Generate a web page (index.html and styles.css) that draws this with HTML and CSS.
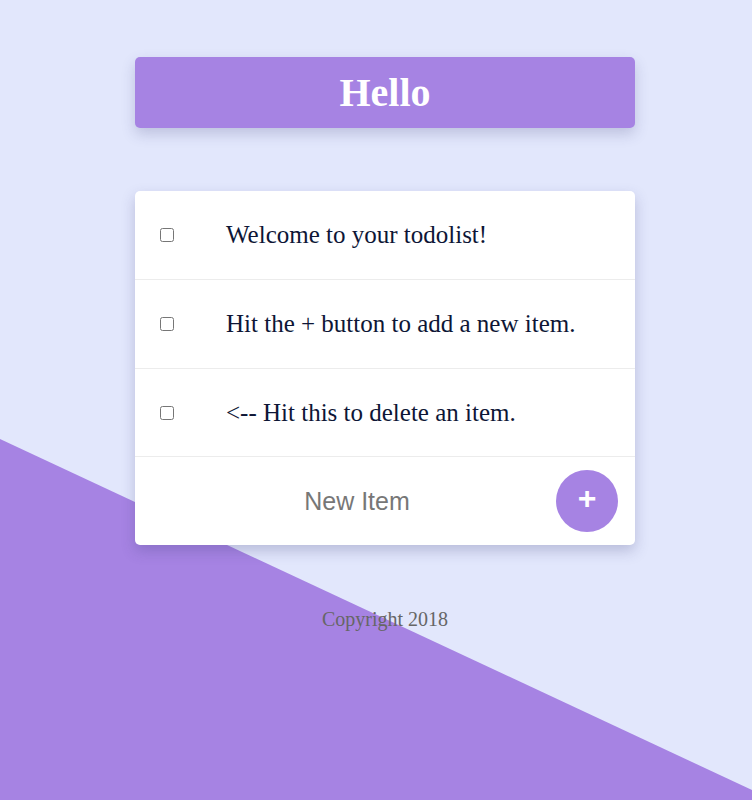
FILE: index.html
```html
<!DOCTYPE html>
<html>
<head>
<meta charset="utf-8">
<link rel="stylesheet" href="styles.css">
</head>
<body>
<div class="bg-shape"></div>
<main class="page">
  <header class="title">Hello</header>
  <section class="card">
    <div class="item">
      <input type="checkbox" class="check">
      <p class="item-text">Welcome to your todolist!</p>
    </div>
    <div class="item">
      <input type="checkbox" class="check">
      <p class="item-text">Hit the + button to add a new item.</p>
    </div>
    <div class="item">
      <input type="checkbox" class="check">
      <p class="item-text">&lt;-- Hit this to delete an item.</p>
    </div>
    <form class="new-row">
      <input type="text" class="new-input" placeholder="New Item">
      <button type="button" class="add-btn">+</button>
    </form>
  </section>
  <footer class="copy">Copyright 2018</footer>
</main>
</body>
</html>
```

FILE: styles.css
```css
html, body {
  margin: 0;
  padding: 0;
}
body {
  background: #e2e7fc;
  min-height: 800px;
  position: relative;
  overflow: hidden;
  font-family: "Liberation Serif", "Times New Roman", serif;
}
.bg-shape {
  position: absolute;
  left: 0;
  top: 0;
  width: 752px;
  height: 800px;
  background: #a683e3;
  clip-path: polygon(0 439px, 752px 790px, 752px 800px, 0 800px);
  z-index: 0;
}
.page {
  position: relative;
  z-index: 1;
  width: 500px;
  margin-left: 135px;
  padding-top: 57px;
  display: flex;
  flex-direction: column;
}
.title {
  height: 71px;
  line-height: 71px;
  background: #a683e3;
  color: #ffffff;
  font-size: 40px;
  font-weight: bold;
  text-align: center;
  border-radius: 5px;
  box-shadow: 0 6px 14px rgba(60, 60, 120, 0.22);
}
.card {
  margin-top: 63px;
  background: #ffffff;
  border-radius: 5px;
  box-shadow: 0 6px 14px rgba(60, 60, 120, 0.25);
  display: flex;
  flex-direction: column;
}
.item {
  height: 88px;
  border-bottom: 1px solid #ececec;
  display: flex;
  align-items: center;
  padding-left: 25px;
}
.item:nth-child(3) {
  height: 87px;
}
.check {
  margin: 0;
  width: 14px;
  height: 14px;
}
.item-text {
  margin: 0 0 0 52px;
  font-size: 25px;
  color: #0e1636;
}
.new-row {
  margin: 0;
  height: 88px;
  display: flex;
  align-items: center;
  padding: 0 17px 0 25px;
  gap: 2px;
}
.new-input {
  flex: 1;
  min-width: 0;
  border: none;
  outline: none;
  background: transparent;
  text-align: center;
  font-family: "Liberation Sans", Arial, sans-serif;
  font-size: 25px;
  padding: 0;
  height: 40px;
}
.new-input::placeholder {
  color: #777777;
}
.add-btn {
  width: 62px;
  height: 62px;
  border-radius: 50%;
  border: none;
  background: #a683e3;
  color: #ffffff;
  font-family: "Liberation Sans", Arial, sans-serif;
  font-size: 32px;
  font-weight: bold;
  line-height: 62px;
  padding: 0 0 6px 0;
  display: flex;
  align-items: center;
  justify-content: center;
}
.copy {
  margin-top: 63px;
  text-align: center;
  font-size: 20px;
  color: #666666;
}
```
